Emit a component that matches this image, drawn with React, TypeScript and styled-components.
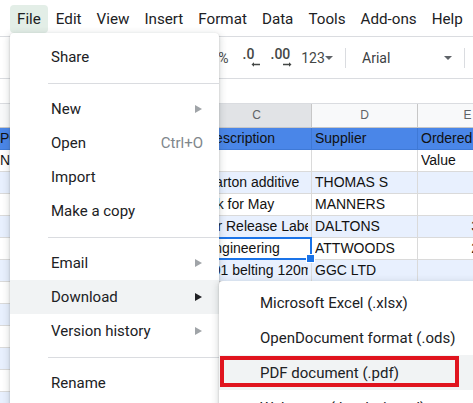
import React from "react";
import styled, { createGlobalStyle, css } from "styled-components";
import { Undo2, Redo2, Printer, PaintRoller } from "lucide-react";

const GlobalStyle = createGlobalStyle`
  html, body {
    margin: 0;
    padding: 0;
    background: #fff;
  }
  body {
    font-family: Roboto, "Liberation Sans", Arial, sans-serif;
  }
  * {
    box-sizing: border-box;
  }
`;

const Screen = styled.div`
  position: relative;
  width: 473px;
  height: 403px;
  overflow: hidden;
  background: #fff;
  display: flex;
  flex-direction: column;
`;

const MenuBar = styled.div`
  display: flex;
  align-items: flex-start;
  flex-shrink: 0;
  height: 37px;
  padding: 5px 0 0 9.5px;
  border-bottom: 1px solid #dadce0;
`;

const MenuTitle = styled.div<{ $active?: boolean }>`
  height: 28px;
  line-height: 28px;
  padding: 0 7.5px;
  font-size: 15.2px;
  color: #202124;
  white-space: nowrap;
  border-radius: 4px;
  background: ${({ $active }) => ($active ? "#e3eee7" : "transparent")};
`;

const Toolbar = styled.div`
  display: flex;
  align-items: center;
  flex-shrink: 0;
  height: 42px;
  border-bottom: 1px solid #dadce0;
  color: #444746;
`;

const LeadTools = styled.div`
  display: flex;
  align-items: center;
  gap: 14px;
  width: 210px;
  flex-shrink: 0;
  padding-left: 16px;
  overflow: hidden;
`;

const ToolButton = styled.div<{ $w: number }>`
  display: flex;
  align-items: center;
  justify-content: center;
  flex-shrink: 0;
  width: ${({ $w }) => $w}px;
  height: 28px;
  font-size: 14px;
  color: #444746;
`;

const Decimal = styled.div<{ $shift: number }>`
  display: flex;
  flex-direction: column;
  align-items: flex-start;
  font-size: 14px;
  font-weight: 500;
  line-height: 13px;
  svg {
    margin-left: ${({ $shift }) => $shift}px;
    margin-top: 1px;
  }
`;

const ToolSep = styled.div<{ $ml: number }>`
  width: 1px;
  height: 20px;
  flex-shrink: 0;
  background: #dadce0;
  margin-left: ${({ $ml }) => $ml}px;
`;

const FontSelect = styled.div`
  display: flex;
  align-items: center;
  justify-content: space-between;
  flex-shrink: 0;
  width: 112px;
  height: 28px;
  padding: 0 6px 0 16px;
  font-size: 14px;
  color: #3c4043;
`;

const FormulaBar = styled.div`
  flex-shrink: 0;
  height: 25px;
  border-bottom: 1px solid #dadce0;
`;

const Sheet = styled.div`
  display: grid;
  grid-template-columns: 103px 102px 110px 106px 100px;
  margin-left: -3px;
  font-family: "Liberation Sans", Arial, sans-serif;
`;

const ColHead = styled.div<{ $selected?: boolean }>`
  height: 24px;
  line-height: 23px;
  text-align: center;
  font-size: 12px;
  color: #5f6368;
  border-right: 1px solid #c7c7c7;
  border-bottom: 1px solid #c7c7c7;
  background: ${({ $selected }) => ($selected ? "#e1e3e6" : "#f8f9fa")};
`;

type Tone = "head" | "white" | "tint";

const toneBg: Record<Tone, string> = {
  head: "#4a86e8",
  white: "#ffffff",
  tint: "#e8f0fe",
};

const Cell = styled.div<{ $tone: Tone; $right?: boolean; $selected?: boolean }>`
  position: relative;
  height: 22px;
  line-height: 21px;
  padding: 0 3px;
  font-size: 14px;
  color: #111;
  white-space: nowrap;
  overflow: hidden;
  text-align: ${({ $right }) => ($right ? "right" : "left")};
  background: ${({ $tone }) => toneBg[$tone]};
  border-right: 1px solid ${({ $tone }) => ($tone === "head" ? "#3f79d6" : "#dadada")};
  border-bottom: 1px solid ${({ $tone }) => ($tone === "head" ? "#3f79d6" : "#dadada")};
  ${({ $selected }) =>
    $selected &&
    css`
      overflow: visible;
      z-index: 1;
      &::before {
        content: "";
        position: absolute;
        inset: -1px;
        border: 2px solid #1a73e8;
        pointer-events: none;
      }
      &::after {
        content: "";
        position: absolute;
        right: -4px;
        bottom: -4px;
        width: 7px;
        height: 7px;
        background: #1a73e8;
        border: 1px solid #fff;
      }
    `}
`;

const CellText = styled.span`
  display: block;
  overflow: hidden;
  white-space: nowrap;
`;

const FileMenu = styled.div`
  position: absolute;
  left: 10px;
  top: 33px;
  width: 209px;
  height: 400px;
  padding-top: 7px;
  background: #fff;
  border-radius: 4px;
  box-shadow: 0 2px 6px 2px rgba(60, 64, 67, 0.15), 0 1px 2px rgba(60, 64, 67, 0.3);
  z-index: 10;
`;

const MenuItem = styled.div<{ $hover?: boolean }>`
  display: flex;
  align-items: center;
  justify-content: space-between;
  height: 34px;
  padding: 0 17px 0 41px;
  font-size: 15px;
  color: #202124;
  white-space: nowrap;
  background: ${({ $hover }) => ($hover ? "#f1f3f4" : "transparent")};
`;

const Shortcut = styled.span`
  color: #80868b;
  font-size: 15px;
  margin-right: -1px;
`;

const MenuSep = styled.div`
  height: 1px;
  margin: 9px 0 8px 38px;
  background: #dadce0;
`;

const SubMenu = styled.div`
  position: absolute;
  left: 219px;
  top: 281px;
  width: 290px;
  height: 160px;
  padding-top: 4px;
  background: #fff;
  border-radius: 4px;
  box-shadow: 0 2px 6px 2px rgba(60, 64, 67, 0.15), 0 1px 2px rgba(60, 64, 67, 0.3);
  z-index: 11;
`;

const SubItem = styled.div<{ $hover?: boolean }>`
  position: relative;
  display: flex;
  align-items: center;
  height: 35px;
  padding-left: 41px;
  font-size: 15px;
  color: #202124;
  white-space: nowrap;
  background: ${({ $hover }) => ($hover ? "#f1f3f4" : "transparent")};
`;

const RedFrame = styled.div`
  position: absolute;
  left: 1px;
  top: 1px;
  width: 239px;
  height: 31px;
  border: 4px solid #e0141e;
`;

const SubArrow = ({ dark }: { dark?: boolean }) => (
  <svg width="7" height="8" viewBox="0 0 7 8">
    <polygon points="0,0 7,4 0,8" fill={dark ? "#202124" : "#a0a4a8"} />
  </svg>
);

const Caret = () => (
  <svg width="8" height="4" viewBox="0 0 8 4">
    <polygon points="0,0 8,0 4,4" fill="#5f6368" />
  </svg>
);

const SmallArrow = ({ dir }: { dir: "left" | "right" }) => (
  <svg width="9" height="5" viewBox="0 0 9 5">
    {dir === "left" ? (
      <path d="M0.5 2.5 L3 0.3 V1.8 H9 V3.2 H3 V4.7 Z" fill="#444746" />
    ) : (
      <path d="M8.5 2.5 L6 0.3 V1.8 H0 V3.2 H6 V4.7 Z" fill="#444746" />
    )}
  </svg>
);

type Row = { tone: Tone; cells: string[] };

const rows: Row[] = [
  { tone: "head", cells: ["PO", "Date", "Description", "Supplier", "Ordered"] },
  { tone: "white", cells: ["Number", "", "", "", "Value"] },
  { tone: "tint", cells: ["", "", "Carton additive", "THOMAS S", ""] },
  { tone: "white", cells: ["", "", "Ink for May", "MANNERS", ""] },
  { tone: "tint", cells: ["", "", "Air Release Labels", "DALTONS", "312.50"] },
  { tone: "white", cells: ["", "", "Engineering", "ATTWOODS", "245.00"] },
  { tone: "tint", cells: ["", "", "201 belting 120mm", "GGC LTD", ""] },
  { tone: "white", cells: ["", "", "", "", ""] },
  { tone: "tint", cells: ["", "", "", "", ""] },
  { tone: "white", cells: ["", "", "", "", ""] },
  { tone: "tint", cells: ["", "", "", "", ""] },
  { tone: "white", cells: ["", "", "", "", ""] },
  { tone: "tint", cells: ["", "", "", "", ""] },
];

const menus = ["File", "Edit", "View", "Insert", "Format", "Data", "Tools", "Add-ons", "Help"];

const App = () => {
  return (
    <Screen>
      <GlobalStyle />
      <MenuBar>
        {menus.map((m) => (
          <MenuTitle key={m} $active={m === "File"}>
            {m}
          </MenuTitle>
        ))}
      </MenuBar>

      <Toolbar>
        <LeadTools>
          <Undo2 size={18} />
          <Redo2 size={18} />
          <Printer size={18} />
          <PaintRoller size={18} />
          <span>100%</span>
        </LeadTools>
        <ToolButton $w={27}>%</ToolButton>
        <ToolButton $w={28}>
          <Decimal $shift={8}>
            .0
            <SmallArrow dir="left" />
          </Decimal>
        </ToolButton>
        <ToolButton $w={32}>
          <Decimal $shift={12}>
            .00
            <SmallArrow dir="right" />
          </Decimal>
        </ToolButton>
        <ToolButton $w={40}>
          123
          <Caret />
        </ToolButton>
        <ToolSep $ml={8} />
        <FontSelect>
          Arial
          <Caret />
        </FontSelect>
        <ToolSep $ml={6} />
      </Toolbar>

      <FormulaBar />

      <Sheet>
        {["A", "B", "C", "D", "E"].map((c) => (
          <ColHead key={c} $selected={c === "C"}>
            {c}
          </ColHead>
        ))}
        {rows.map((row, r) =>
          row.cells.map((text, c) => (
            <Cell
              key={`${r}-${c}`}
              $tone={row.tone}
              $right={c === 4 && r > 1}
              $selected={r === 5 && c === 2}
            >
              <CellText>{text}</CellText>
            </Cell>
          ))
        )}
      </Sheet>

      <FileMenu>
        <MenuItem>Share</MenuItem>
        <MenuSep />
        <MenuItem>
          New
          <SubArrow />
        </MenuItem>
        <MenuItem>
          Open
          <Shortcut>Ctrl+O</Shortcut>
        </MenuItem>
        <MenuItem>Import</MenuItem>
        <MenuItem>Make a copy</MenuItem>
        <MenuSep />
        <MenuItem>
          Email
          <SubArrow />
        </MenuItem>
        <MenuItem $hover>
          Download
          <SubArrow dark />
        </MenuItem>
        <MenuItem>
          Version history
          <SubArrow />
        </MenuItem>
        <MenuSep />
        <MenuItem>Rename</MenuItem>
      </FileMenu>

      <SubMenu>
        <SubItem>Microsoft Excel (.xlsx)</SubItem>
        <SubItem>OpenDocument format (.ods)</SubItem>
        <SubItem $hover>
          PDF document (.pdf)
          <RedFrame />
        </SubItem>
        <SubItem>Web page (.html, zipped)</SubItem>
      </SubMenu>
    </Screen>
  );
};

export default App;
